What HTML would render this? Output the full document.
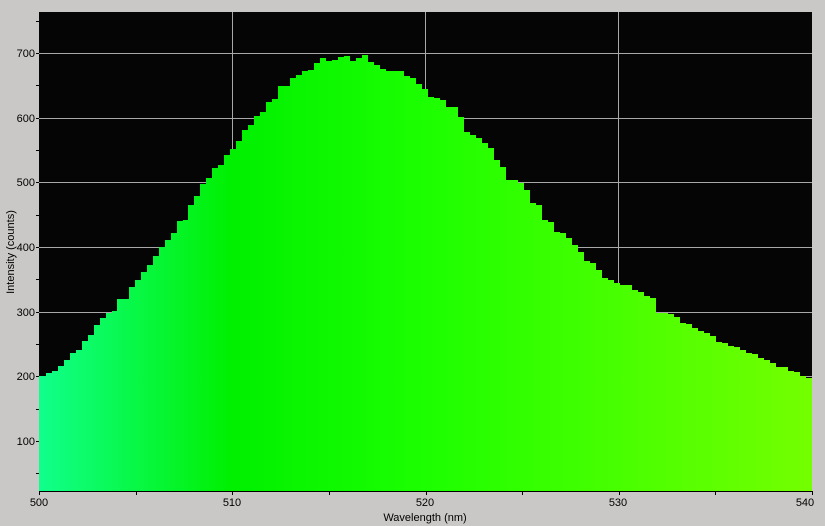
<!DOCTYPE html>
<html><head><style>
body{margin:0;width:825px;height:526px;background:#cac8c6;overflow:hidden;font-family:"Liberation Sans",sans-serif;}
svg{position:absolute;left:0;top:0}
text{font-family:"Liberation Sans",sans-serif;font-size:11px;fill:#000}
</style></head><body>
<svg width="825" height="526" viewBox="0 0 825 526">
<defs>
<linearGradient id="g" x1="39" x2="812" y1="0" y2="0" gradientUnits="userSpaceOnUse">
<stop offset="0" stop-color="#10ff8c"/>
<stop offset="0.25" stop-color="#00f000"/>
<stop offset="0.5" stop-color="#1cff00"/>
<stop offset="1" stop-color="#74ff00"/>
</linearGradient>
</defs>
<rect x="39" y="12" width="773" height="479" fill="#050505"/>
<g stroke="#a8a8a8" stroke-width="1">
<line x1="232.5" y1="12" x2="232.5" y2="491"/>
<line x1="425.5" y1="12" x2="425.5" y2="491"/>
<line x1="618.5" y1="12" x2="618.5" y2="491"/>
<line x1="39" y1="53.5" x2="812" y2="53.5"/>
<line x1="39" y1="118.5" x2="812" y2="118.5"/>
<line x1="39" y1="182.5" x2="812" y2="182.5"/>
<line x1="39" y1="247.5" x2="812" y2="247.5"/>
<line x1="39" y1="312.5" x2="812" y2="312.5"/>
<line x1="39" y1="376.5" x2="812" y2="376.5"/>
<line x1="39" y1="441.5" x2="812" y2="441.5"/>
</g>
<path id="bars" fill="url(#g)"/>
<g stroke="#000" stroke-width="1" id="ticks"></g>
<line x1="39" y1="491.5" x2="812" y2="491.5" stroke="#000"/>
<g text-anchor="end">
<text x="35" y="57">700</text><text x="35" y="122">600</text><text x="35" y="186">500</text>
<text x="35" y="251">400</text><text x="35" y="316">300</text><text x="35" y="380">200</text><text x="35" y="445">100</text>
</g>
<g text-anchor="middle">
<text x="39" y="506">500</text><text x="232" y="506">510</text><text x="425" y="506">520</text><text x="618" y="506">530</text><text x="805" y="506">540</text>
<text x="425" y="521">Wavelength (nm)</text>
<text transform="translate(14,252) rotate(-90)">Intensity (counts)</text>
</g>
</svg>
<script>
var t=[40,376,46,373,52,371,58,366,64,360,70,353,76,350,82,341,88,335,94,325,100,318,106,313,112,311,117,299,123,299,129,287,135,280,141,272,147,265,153,256,159,247,165,240,171,233,177,221,183,220,188,205,194,196,200,184,206,178,212,168,218,165,224,155,230,149,236,141,242,130,248,125,254,116,260,112,266,102,272,99,278,86,284,86,290,78,296,75,302,71,308,70,314,63,320,58,326,61,332,60,338,57,344,56,350,61,356,58,362,55,368,62,374,65,380,69,386,71,392,71,398,71,404,76,410,78,416,84,422,89,428,97,434,98,440,100,446,107,452,107,458,117,464,132,470,135,476,138,482,143,488,148,494,160,500,167,506,180,512,180,518,183,524,190,530,203,536,205,542,220,548,222,554,232,560,233,566,238,572,245,578,252,584,261,590,263,596,270,602,278,608,280,614,283,620,285,626,285,632,290,638,292,644,296,650,298,656,313,662,313,668,314,674,317,680,323,686,324,692,328,698,331,704,333,710,336,716,342,722,343,728,346,734,347,740,350,746,353,752,354,758,358,764,360,770,363,776,367,782,367,788,371,794,372,800,376,806,378];
var d="M39 491 L39 "+t[1];
for(var i=0;i<t.length;i+=2){var x=(i==0?39:t[i]);var nx=(i+2<t.length?t[i+2]:812);d+=" L"+x+" "+t[i+1]+" L"+nx+" "+t[i+1];}
d+=" L812 491 Z";document.getElementById("bars").setAttribute("d",d);
var g=document.getElementById("ticks"),s="";
for(var v=50;v<=750;v+=50){var y=Math.round(53+(700-v)*0.6467)+0.5;s+='<line x1="36" y1="'+y+'" x2="39" y2="'+y+'"/>';}
for(var w=0;w<=40;w+=5){var x=Math.round(39+w*773/40)+0.5;s+='<line x1="'+x+'" y1="491" x2="'+x+'" y2="495"/>';}
g.innerHTML=s;
</script>
</body></html>
